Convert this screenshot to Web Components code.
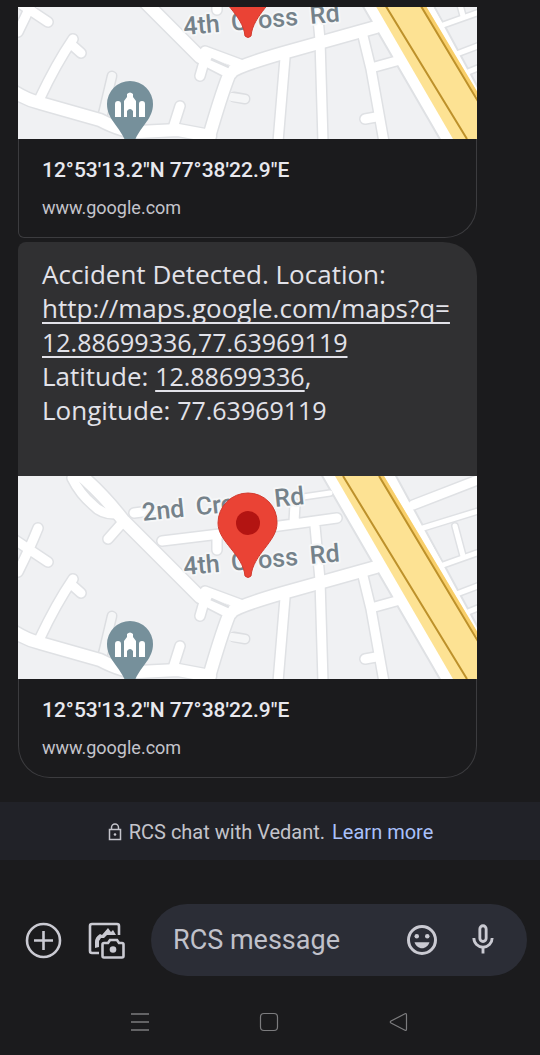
<!DOCTYPE html>
<html lang="en">
<head>
<meta charset="utf-8">
<meta name="viewport" content="width=device-width, initial-scale=1">
<title>RCS chat with Vedant</title>
<style>
  html { background: #1b1b1d; }
  body { margin: 0; min-height: 100vh; font-family: Roboto, "Noto Sans", sans-serif; color: #e2e2e9; }
</style>
</head>
<body>
<chat-app></chat-app>

<template id="chat-app">
  <style>
    :host { display: flex; flex-direction: column; min-height: 100vh; background: #1b1b1d; }
    main { display: flex; flex-direction: column; gap: 4px; padding: 7px 63px 24px 18px; }
    a { color: inherit; text-decoration-thickness: 2px; text-underline-offset: 4px; text-decoration-skip-ink: none; }
    .number { font-size: 25px; }
  </style>
  <main>
    <chat-message tail="joined">
      <link-preview tail="joined" heading="12°53'13.2&quot;N 77°38'22.9&quot;E" site="www.google.com"><map-view cropped></map-view></link-preview>
    </chat-message>
    <chat-message>
      <span slot="text">Accident Detected. Location:<br><a href="http://maps.google.com/maps?q=12.88699336,77.63969119">http://maps.google.com/maps?q=</a><br><a class="number" href="http://maps.google.com/maps?q=12.88699336,77.63969119">12.88699336,77.63969119</a><br>Latitude: <a class="number" href="tel:12.88699336">12.88699336</a>,<br>Longitude: <span class="number">77.63969119</span></span>
      <link-preview heading="12°53'13.2&quot;N 77°38'22.9&quot;E" site="www.google.com"><map-view></map-view></link-preview>
    </chat-message>
  </main>
  <chat-notice></chat-notice>
  <chat-composer></chat-composer>
  <system-nav></system-nav>
</template>

<template id="chat-message">
  <style>
    :host { display: block; }
    .text { display: none; background: #303032; border-radius: 8px 34px 0 0; padding: 15px 24px 49px; font: 26px/34px "Open Sans", "Noto Sans", sans-serif; white-space: nowrap; }
    .text.filled { display: block; }
  </style>
  <div class="text"><slot name="text"></slot></div>
  <slot></slot>
</template>

<template id="link-preview">
  <style>
    :host { display: block; }
    .info { display: flex; flex-direction: column; gap: 13px; padding: 18px 23px 17px; border: 1px solid #3c3c3f; border-top: 0; border-radius: 0 0 32px 32px; }
    :host([tail="joined"]) .info { border-radius: 0 0 32px 6px; }
    h2 { margin: 0; font: 500 21px/26px Roboto, "Noto Sans", sans-serif; color: #e8e8ee; }
    p { margin: 0; font-size: 18px; line-height: 24px; color: #c4c4cb; }
  </style>
  <slot></slot>
  <div class="info"><h2></h2><p></p></div>
</template>

<template id="map-view">
  <style>
    :host { display: block; aspect-ratio: 459 / 203; overflow: hidden; background: #f0f1f3; }
    :host([cropped]) { aspect-ratio: 459 / 132; }
    :host([cropped]) .upper { display: none; }
    svg { display: block; width: 100%; height: 100%; }
    .case, .road { fill: none; stroke-linecap: round; stroke-linejoin: round; }
    .case { stroke: #dfe1e4; --s: 8px; --m: 12px; --l: 15px; }
    .road { stroke: #fff; --s: 5px; --m: 9px; --l: 12px; }
    .s { stroke-width: var(--s); }
    .m { stroke-width: var(--m); }
    .l { stroke-width: var(--l); }
    text { font: 500 25px Roboto, sans-serif; fill: #75828a; stroke: #f6f7f8; stroke-width: 4px; paint-order: stroke; stroke-linejoin: round; }
  </style>
  <svg viewBox="0 0 459 203" preserveAspectRatio="xMidYMax slice" role="img" aria-label="Map">
    <defs>
      <g id="roads">
        <path class="s" d="M405 52L470 32M437 50L445 80M425 89L470 73M436 119L470 106M445 138L470 128M406 60L422 88M285 21L312 17"/>
        <path class="m" d="M54 2Q62 18 75 29Q84 39 100 38M105 46L90 63M116 37L140 34M144 65L210 57L319 42M199 60V74M277 28L276 46M297 50L302 104L305 206M345 100L353 133L366 206M353 132L382 124M347 183L358 181M187 115L222 128M186 126L182 140M20 52Q12 72 0 96M-3 64L30 86M55 103Q38 128 22 162M54 109L63 117M162 170L155 192M267 122L260 206M395 29L470 0"/>
        <path class="l" d="M54 -8Q82 14 105 44L182 121L213 137M213 136Q220 130 265 117L358 91M211 139Q202 162 189 208M-5 155Q9 164 22 167L82 184Q105 196 120 196L160 194L192 200"/>
      </g>
    </defs>
    <rect width="459" height="203" fill="#f0f1f3"/>
    <path d="M94 140L85 178M216 161L227 163" stroke="#dcdee1" stroke-width="11" stroke-linecap="round"/>
    <path d="M94 140L85 178M214 161L227 163" stroke="#f5f6f7" stroke-width="8" stroke-linecap="round"/>
    <use href="#roads" class="case"/>
    <path d="M303 -2L423 205H489L377 -2Z" fill="#fff" stroke="#dfe1e4" stroke-width="2"/>
    <use href="#roads" class="road"/>
    <path d="M193 123L211 131" stroke="#dfe1e4" stroke-width="3"/>
    <path d="M317 0L435 203H487L366 0Z" fill="#fde293"/>
    <path d="M363 0L459 160" stroke="#f8cf6b" stroke-width="5"/>
    <path d="M325 0L449 203M361 0L461 167" stroke="#bd912b" stroke-width="2"/>
    <text class="upper" transform="translate(125 45) rotate(-6)"><tspan x="0">2nd</tspan> <tspan x="54">Cross</tspan> <tspan x="133">Rd</tspan></text>
    <text transform="translate(166 99) rotate(-5)"><tspan x="0">4th</tspan> <tspan x="48">Cr</tspan><tspan x="75">oss</tspan> <tspan x="127">Rd</tspan></text>
    <path d="M112 145a23 23 0 0 1 23 23c0 17-15 23-20 42h-6c-5-19-20-25-20-42a23 23 0 0 1 23-23Z" fill="#76909b"/>
    <path d="M97 181V168q0-3 3-3t3 3v13ZM121 181V168q0-3 3-3t3 3v13ZM106 181V165l3-4v-3q3-3 6 0v3l3 4v16h-3v-6q-3-4-6 0v6Z" fill="#fff"/>
    <path d="M230 17a29 29 0 0 1 29 30c0 19-24 31-26 53q-3 3-6 0c-2-22-27-34-27-53a30 30 0 0 1 30-30Z" fill="#ea4335" stroke="#d23a2e"/>
    <circle cx="230" cy="47" r="12" fill="#b31412"/>
  </svg>
</template>

<template id="chat-notice">
  <style>
    :host { display: flex; justify-content: center; align-items: center; gap: 6px; padding: 17px 16px 15px; background: #212228; color: #c4c4cb; font-size: 20px; line-height: 26px; }
    svg { width: 16px; height: 18px; }
    p { margin: 0; display: flex; gap: 7px; }
    a { color: #a9c1fb; text-decoration: none; }
  </style>
  <svg viewBox="0 0 16 18" fill="none" stroke="currentColor" stroke-width="1.5" aria-hidden="true"><rect x="2.500" y="6.500" width="11" height="10"/><path d="M4.500 6V4.500a3.500 3.500 0 0 1 7 0V6"/><circle cx="8" cy="11.500" r="1.300" fill="currentColor" stroke="none"/></svg>
  <p><span>RCS chat with Vedant.</span> <a href="#learn-more">Learn more</a></p>
</template>

<template id="chat-composer">
  <style>
    :host { display: flex; align-items: center; padding: 44px 13px 36px 25px; gap: 26px; color: #cacad2; }
    button { flex: none; padding: 0; border: 0; background: none; color: inherit; display: block; }
    svg { display: block; width: 37px; height: 37px; }
    .field { flex: 1; min-width: 0; display: flex; align-items: center; gap: 25px; height: 72px; box-sizing: border-box; padding: 0 26px 0 22px; border-radius: 36px; background: #2b2d36; }
    .field svg { width: 36px; height: 36px; }
    input { flex: 1; min-width: 0; padding: 0; border: 0; outline: 0; background: none; color: inherit; font: 27px/36px Roboto, sans-serif; }
    input::placeholder { color: #c0c1ca; opacity: 1; }
  </style>
  <button type="button" aria-label="Add"><svg viewBox="0 0 37 37" fill="none" stroke="currentColor" stroke-width="2.600"><circle cx="18.500" cy="18.500" r="16.500"/><path d="M18.500 9v19M9 18.500h19"/></svg></button>
  <button type="button" aria-label="Gallery"><svg viewBox="0 0 37 37" fill="none" stroke="currentColor" stroke-width="2.600"><path d="M11 31H4q-2 0-2-2V4q0-2 2-2h25q2 0 2 2v9"/><path d="M7 26v-6q0-5 5-8l2 1 6-7 3 4 2-2 3 5h-9l-3 3h-3l-2 3v6Z" fill="currentColor" stroke="none"/><path d="M16 21h4l2-3h7l2 3h3q1.500 0 1.500 1.500v11.500q0 1.500-1.500 1.500H16q-1.500 0-1.500-1.500v-11.500q0-1.500 1.500-1.500Z"/><circle cx="25" cy="27.500" r="3.300" fill="currentColor" stroke="none"/></svg></button>
  <div class="field">
    <input type="text" placeholder="RCS message" aria-label="RCS message">
    <button type="button" aria-label="Emoji"><svg viewBox="0 0 24 24" fill="currentColor"><path d="M12 2a10 10 0 1 0 0 20 10 10 0 0 0 0-20Zm0 18a8 8 0 1 1 0-16 8 8 0 0 1 0 16Z"/><circle cx="8.500" cy="9.500" r="1.500"/><circle cx="15.500" cy="9.500" r="1.500"/><path d="M7 13.500h10c-.8 2.400-2.700 4-5 4s-4.200-1.600-5-4Z"/></svg></button>
    <button type="button" aria-label="Voice message"><svg viewBox="0 0 24 24" fill="none" stroke="currentColor" stroke-width="1.900"><rect x="9.900" y="2.500" width="4.200" height="10.500" rx="2.100"/><path d="M5.900 10.700a6.100 6.100 0 0 0 12.200 0M12 16.800V21"/></svg></button>
  </div>
</template>

<template id="system-nav">
  <style>
    :host { display: grid; grid-template-columns: repeat(3, 1fr); justify-items: center; padding: 0 78px 24px 75px; color: #7c7c7e; }
    button { padding: 0; border: 0; background: none; color: inherit; display: block; }
    svg { display: block; width: 20px; height: 20px; }
  </style>
  <button type="button" aria-label="Recent apps"><svg viewBox="0 0 20 20" fill="none" stroke="currentColor" stroke-width="1.400"><path d="M1 2h18M1 10h18M1 18h18"/></svg></button>
  <button type="button" aria-label="Home"><svg viewBox="0 0 20 20" fill="none" stroke="currentColor" stroke-width="1.200"><rect x="1.500" y="1.500" width="17" height="17" rx="3.500"/></svg></button>
  <button type="button" aria-label="Back"><svg viewBox="0 0 20 20" fill="none" stroke="currentColor" stroke-width="1.200"><path d="M17 1.800Q18.500 1 18.500 3V17Q18.500 19 17 18.200L3 11Q1.500 10 3 9Z"/></svg></button>
</template>

<script>
  class TemplateElement extends HTMLElement {
    constructor() {
      super();
      this.attachShadow({ mode: "open" });
      this.shadowRoot.append(document.getElementById(this.localName).content.cloneNode(true));
    }
  }
  class ChatMessage extends TemplateElement {
    connectedCallback() {
      const filled = this.querySelector('[slot="text"]') !== null;
      this.shadowRoot.querySelector(".text").classList.toggle("filled", filled);
    }
  }
  class LinkPreview extends TemplateElement {
    connectedCallback() {
      this.shadowRoot.querySelector("h2").textContent = this.getAttribute("heading");
      this.shadowRoot.querySelector("p").textContent = this.getAttribute("site");
    }
  }
  customElements.define("map-view", class extends TemplateElement {});
  customElements.define("link-preview", LinkPreview);
  customElements.define("chat-message", ChatMessage);
  customElements.define("chat-notice", class extends TemplateElement {});
  customElements.define("chat-composer", class extends TemplateElement {});
  customElements.define("system-nav", class extends TemplateElement {});
  customElements.define("chat-app", class extends TemplateElement {});
</script>
</body>
</html>
